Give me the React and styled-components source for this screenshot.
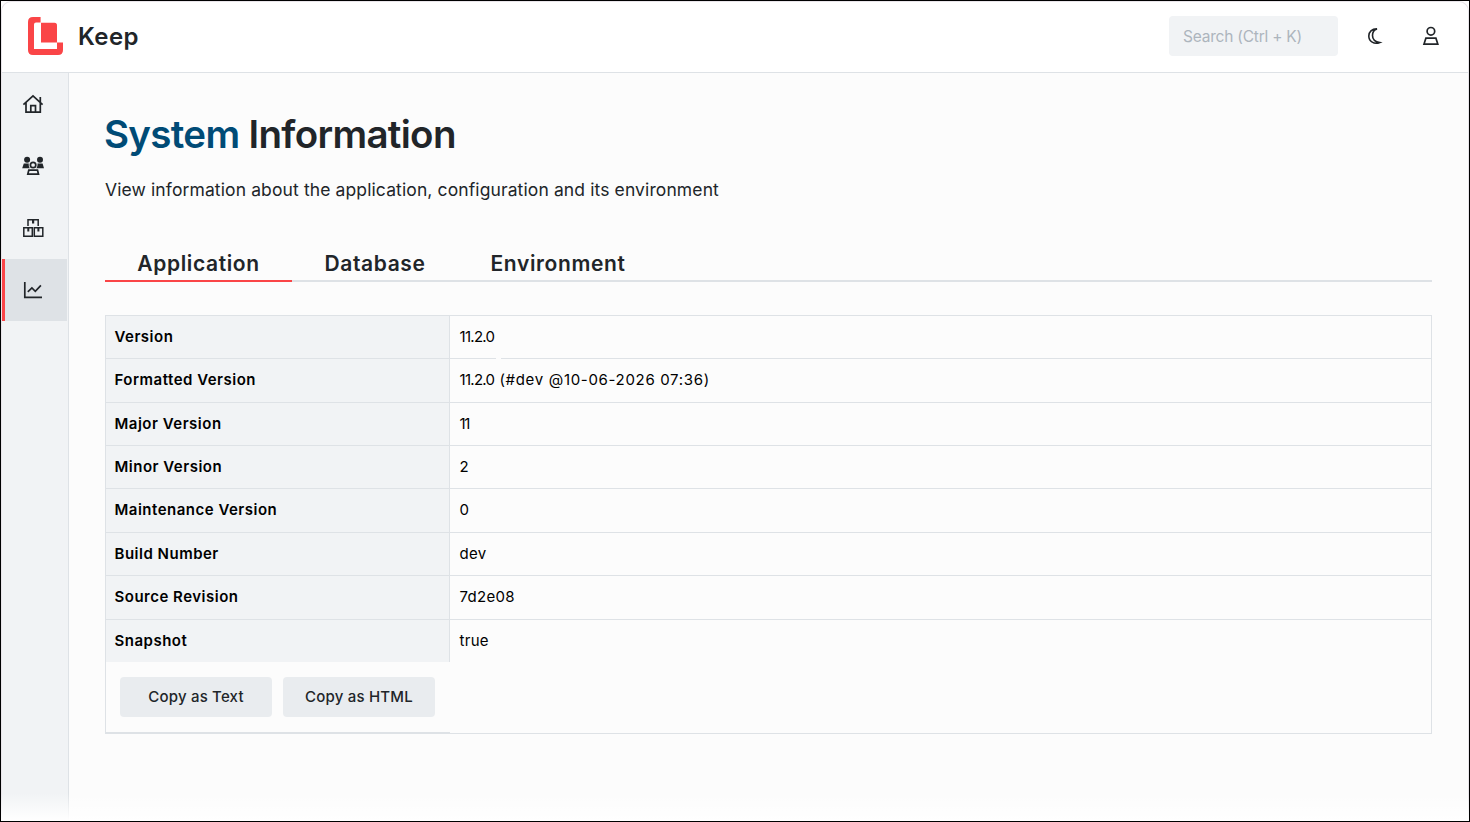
import React, { useState } from "react";
import styled, { createGlobalStyle } from "styled-components";

const rows = [
  { name: "Version", value: "11.2.0", spacing: -0.7, gap: true },
  { name: "Formatted Version", value: "11.2.0", build: "(#dev @10-06-2026 07:36)", spacing: -0.7 },
  { name: "Major Version", value: "11", spacing: -1.4 },
  { name: "Minor Version", value: "2" },
  { name: "Maintenance Version", value: "0" },
  { name: "Build Number", value: "dev" },
  { name: "Source Revision", value: "7d2e08" },
  { name: "Snapshot", value: "true" },
];

const tabs = [
  { name: "Application", width: 187 },
  { name: "Database", width: 166 },
  { name: "Environment", width: 200 },
];

function Logo() {
  return (
    <svg width="35" height="38" viewBox="0 0 35 38" fill="#fa4547">
      <path d="M5 0H12.6V5.4H8Q6 5.4 6 7.4V32H29V25.6H35V33Q35 38 30 38H5Q0 38 0 33V5Q0 0 5 0Z" />
      <path d="M13 5.7H26.5Q29 5.7 29 8.2V25.4H13Z" />
    </svg>
  );
}

function HomeIcon() {
  return (
    <svg width="22" height="20" viewBox="22 94 22 20" fill="none" stroke="#212529" strokeWidth="1.7">
      <path d="M23.4 104.6L33 95.9L42.6 104.6M26 102.8V112.2H40.3V102.8M30.8 112V105.7H35.5V112M40.3 97V102.5" />
    </svg>
  );
}

function TeamIcon() {
  return (
    <svg width="22" height="20" viewBox="22 156 22 20" fill="#212529">
      <circle cx="27.1" cy="159.8" r="3" />
      <circle cx="40" cy="159.8" r="3" />
      <path d="M22.2 168.3L23.8 163.5H28.8C28.6 165.3 28.8 167 29.9 168.3ZM44 168.3L42.6 163.5H37.5C37.7 165.3 37.4 167 36.3 168.3Z" />
      <circle cx="33.1" cy="165" r="2.7" fill="none" stroke="#212529" strokeWidth="1.7" />
      <path d="M28.8 170.2H37.5L38.5 174.2H27.8Z" fill="none" stroke="#212529" strokeWidth="1.7" />
    </svg>
  );
}

function BoxesIcon() {
  return (
    <svg width="22" height="20" viewBox="22 218 22 20" fill="none" stroke="#212529" strokeWidth="1.5">
      <path d="M28 226V219.8H38.2V226M23.8 227.8H32.3V236.2H23.8ZM34.3 227.8H42.8V236.2H34.3Z" />
      <path d="M32 220H34.2V223.4H32ZM27.3 228H29.3V231.4H27.3ZM37.4 228H39.4V231.4H37.4Z" fill="#212529" stroke="none" />
    </svg>
  );
}

function ChartIcon() {
  return (
    <svg width="22" height="20" viewBox="22 280 22 20" fill="none" stroke="#212529" strokeWidth="1.7">
      <path d="M24.8 282V297.3H42M27.8 291.8L31.9 287.9L35.3 291.3L40.9 285.4" />
    </svg>
  );
}

function MoonIcon() {
  return (
    <svg width="16" height="18" viewBox="1367 27 16 18" fill="none" stroke="#212529" strokeWidth="1.6">
      <path d="M1377 28.9C1371.8 28.8 1368.8 32 1368.8 36C1368.8 41.3 1374.2 44.9 1379.8 42.5C1375.5 41.8 1372.5 39.4 1372.5 35.4C1372.5 32.2 1374.4 29.7 1377 28.9Z" />
    </svg>
  );
}

function UserIcon() {
  return (
    <svg width="18" height="20" viewBox="1422 26 18 20" fill="none" stroke="#212529" strokeWidth="1.7">
      <circle cx="1430.9" cy="31.3" r="3.8" />
      <path d="M1425.9 38.2H1435.9L1437.8 44.1H1424Z" />
    </svg>
  );
}

function App() {
  const [tab, setTab] = useState("Application");

  return (
    <>
      <GlobalStyle />
      <Frame>
        <Header>
          <Logo />
          <Brand>Keep</Brand>
          <Search placeholder="Search (Ctrl + K)" />
          <HeaderButton $left={29}><MoonIcon /></HeaderButton>
          <HeaderButton $left={39}><UserIcon /></HeaderButton>
        </Header>
        <Body>
          <Sidebar>
            <SideItem><HomeIcon /></SideItem>
            <SideItem><TeamIcon /></SideItem>
            <SideItem><BoxesIcon /></SideItem>
            <SideItem $active><ChartIcon /></SideItem>
          </Sidebar>
          <Content>
            <Title><span>System</span> Information</Title>
            <Description>
              View information about the application, configuration and its environment
            </Description>
            <Tabs>
              {tabs.map((list) => (
                <Tab
                  key={list.name}
                  $width={list.width}
                  $active={tab === list.name}
                  onClick={() => setTab(list.name)}
                >
                  {list.name}
                </Tab>
              ))}
            </Tabs>
            <Table>
              <Rows>
                {rows.map((list) => (
                  <Row key={list.name}>
                    <Name>{list.name}</Name>
                    <Value $gap={list.gap} $spacing={list.spacing}>
                      {list.value}
                      {list.build && <Build>{list.build}</Build>}
                    </Value>
                  </Row>
                ))}
              </Rows>
              <Actions>
                <CopyButton>Copy as Text</CopyButton>
                <CopyButton>Copy as HTML</CopyButton>
              </Actions>
            </Table>
          </Content>
        </Body>
        <Fade />
      </Frame>
    </>
  );
}

export default App;

const GlobalStyle = createGlobalStyle`
  * {
    box-sizing: border-box;
  }
  body {
    margin: 0;
    background: #fff;
    font-family: "Inter", "Open Sans", sans-serif;
    color: #212529;
  }
`;

const Frame = styled.div`
  position: relative;
  width: 1470px;
  height: 822px;
  display: flex;
  flex-direction: column;
  border: 1px solid #000;
  overflow: hidden;

  &::before {
    content: "";
    position: absolute;
    inset: 0;
    border: 1px solid #e9e5ea;
    border-bottom: 0;
    border-radius: 10px 10px 0 0;
    pointer-events: none;
  }
`;

const Header = styled.header`
  height: 72px;
  flex: none;
  display: flex;
  align-items: center;
  padding: 0 29px 2px 27px;
  border-bottom: 1px solid #dee2e6;
  background: #fff;
`;

const Brand = styled.div`
  flex: 1;
  margin-left: 15px;
  padding-top: 2px;
  font-size: 24px;
  font-weight: 600;
  letter-spacing: 0.4px;
  color: #212529;
`;

const Search = styled.input`
  width: 169px;
  height: 40px;
  padding: 2px 14px 0;
  border: 0;
  border-radius: 4px;
  background: #f1f3f5;
  font: 400 15.5px "Inter", sans-serif;
  letter-spacing: -0.22px;
  outline: none;

  &::placeholder {
    color: #adb5bd;
    opacity: 1;
  }
`;

const HeaderButton = styled.button`
  display: flex;
  margin-left: ${(props) => props.$left}px;
  padding: 0;
  border: 0;
  background: none;
`;

const Body = styled.div`
  flex: 1;
  display: flex;
`;

const Sidebar = styled.nav`
  width: 68px;
  flex: none;
  padding: 0 1px;
  border-right: 1px solid #dee2e6;
  background: #f1f3f5;
`;

const SideItem = styled.div`
  height: 62px;
  display: flex;
  align-items: center;
  justify-content: center;
  padding-right: ${(props) => (props.$active ? "6px" : "3px")};
  border-left: ${(props) => (props.$active ? "3px solid #fa4547" : "0")};
  background: ${(props) => (props.$active ? "#dee2e6" : "transparent")};
`;

const Content = styled.main`
  flex: 1;
  padding: 36px 37px 0 36px;
  background: #fcfcfc;
`;

const Title = styled.h1`
  margin: 0 0 0 -1px;
  font-size: 38.5px;
  line-height: 50px;
  font-weight: 600;
  letter-spacing: -0.68px;
  color: #212529;

  span {
    color: #004b76;
  }
`;

const Description = styled.p`
  margin: 19px 0 0;
  font-size: 17.5px;
  line-height: 24px;
  letter-spacing: 0.115px;
`;

const Tabs = styled.div`
  height: 36px;
  margin-top: 44px;
  display: flex;
  border-bottom: 2px solid #dee2e6;
`;

const Tab = styled.button`
  width: ${(props) => props.$width}px;
  height: 36px;
  padding: 0;
  border: 0;
  border-bottom: 2px solid ${(props) => (props.$active ? "#fa4547" : "transparent")};
  background: none;
  font: 600 21px "Inter", sans-serif;
  letter-spacing: 0.63px;
  color: #212529;
`;

const Table = styled.div`
  margin-top: 33px;
  border: 1px solid #dee2e6;
`;

const Rows = styled.div`
  height: 346px;
  display: grid;
  grid-template-rows: 43px 44px 43px 43px 44px 43px 44px 42px;
`;

const Row = styled.div`
  display: grid;
  grid-template-columns: 344px 1fr;

  &:not(:last-child) {
    border-bottom: 1px solid #dee2e6;
  }
`;

const Name = styled.div`
  display: flex;
  align-items: center;
  padding: 0 0 1px 8.5px;
  border-right: 1px solid #dee2e6;
  background: #f1f3f5;
  font-size: 15px;
  line-height: 18px;
  font-weight: 600;
  letter-spacing: 0.5px;
  color: #000;
`;

const Value = styled.div`
  position: relative;
  display: flex;
  align-items: center;
  padding: 0 0 1px 9.5px;
  font-size: 15px;
  line-height: 18px;
  letter-spacing: ${(props) => props.$spacing || 0.3}px;
  color: #000;

  &::after {
    content: "";
    display: ${(props) => (props.$gap ? "block" : "none")};
    position: absolute;
    left: 46px;
    bottom: -1px;
    width: 5px;
    height: 1px;
    background: #fcfcfc;
  }
`;

const Build = styled.span`
  margin-left: 5px;
  letter-spacing: 0.68px;
`;

const Actions = styled.div`
  width: 344px;
  height: 71px;
  display: flex;
  gap: 11px;
  padding: 15px 14px 0;
  border-bottom: 1px solid #dee2e6;
`;

const CopyButton = styled.button`
  width: 152px;
  height: 40px;
  padding: 0 0 1px;
  border: 0;
  border-radius: 4px;
  background: #e9ecef;
  font: 500 15px "Inter", sans-serif;
  letter-spacing: 0.2px;
  color: #212529;
`;

const Fade = styled.div`
  position: absolute;
  left: 0;
  right: 0;
  bottom: 0;
  height: 28px;
  background: linear-gradient(rgba(255, 255, 255, 0), #fff);
  pointer-events: none;
`;
